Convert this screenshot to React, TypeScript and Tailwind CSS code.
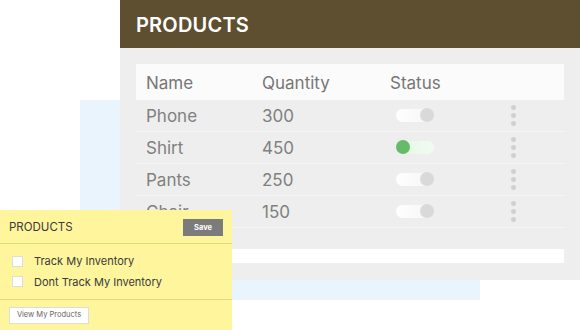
import React from "react";

const rows = [
  { name: "Phone", qty: 300, on: false },
  { name: "Shirt", qty: 450, on: true },
  { name: "Pants", qty: 250, on: false },
  { name: "Chair", qty: 150, on: false },
];

function Toggle({ on }: { on: boolean }) {
  return (
    <div className="relative h-[13px] w-[38px]">
      <div
        className={
          on
            ? "absolute inset-0 rounded-full bg-gradient-to-r from-[#e3f7e3] to-[#f2fbf2]"
            : "absolute inset-0 rounded-full bg-gradient-to-r from-white to-[#f4f4f4]"
        }
      />
      <div
        className={
          on
            ? "absolute -top-[1px] left-0 h-[14px] w-[14px] rounded-full bg-[#66bb6a]"
            : "absolute -top-[1px] right-0 h-[14px] w-[14px] rounded-full bg-[#d9d9d9]"
        }
      />
    </div>
  );
}

function Dots() {
  return (
    <div className="flex flex-col items-center gap-[3px]">
      <span className="h-[5px] w-[5px] rounded-full bg-[#d0d0d0]" />
      <span className="h-[5px] w-[5px] rounded-full bg-[#d0d0d0]" />
      <span className="h-[5px] w-[5px] rounded-full bg-[#d0d0d0]" />
    </div>
  );
}

function ProductsTable() {
  return (
    <div className="absolute left-[120px] top-0 flex h-[280px] w-[460px] flex-col bg-[#eeeeee]">
      <div className="flex h-[48px] items-center bg-[#5f4f31] pl-[16px] pt-[2px]">
        <h1 className="text-[20px] font-semibold tracking-[0.2px] text-white">PRODUCTS</h1>
      </div>
      <div className="mx-[16px] mt-[16px] flex flex-col">
        <div className="flex h-[36px] items-center bg-[#fbfbfb] pt-[3px] text-[17px] text-[#777]">
          <div className="w-[126px] pl-[10px]">Name</div>
          <div className="w-[128px]">Quantity</div>
          <div>Status</div>
        </div>
        {rows.map((r) => (
          <div
            key={r.name}
            className="flex h-[32px] items-center border-b border-[#f6f6f6] text-[17px] text-[#808080]"
          >
            <div className="w-[126px] pl-[10px] pt-[2px]">{r.name}</div>
            <div className="w-[134px] pt-[2px]">{r.qty}</div>
            <div className="w-[115px]">
              <Toggle on={r.on} />
            </div>
            <Dots />
          </div>
        ))}
        <div className="mt-[21px] h-[14px] bg-white" />
      </div>
    </div>
  );
}

function InventoryCard() {
  return (
    <div className="absolute left-0 top-[210px] flex h-[120px] w-[232px] flex-col bg-[#fff59d] text-[#3a3a3a]">
      <div className="flex h-[34px] items-center justify-between border-b border-[#e6d978] px-[9px] pt-[3px]">
        <span className="text-[11.5px]">PRODUCTS</span>
        <button className="-mt-[1px] h-[17px] w-[40px] bg-[#7b7b7b] text-[7.5px] font-bold text-white">Save</button>
      </div>
      <div className="flex flex-1 flex-col gap-[4px] border-b border-[#e6d978] pl-[12px] pt-[9px]">
        <label className="flex items-center gap-[11px] text-[11px]">
          <span className="h-[11px] w-[11px] border border-[#ddd] bg-white" />
          Track My Inventory
        </label>
        <label className="flex items-center gap-[11px] text-[11px]">
          <span className="h-[11px] w-[11px] border border-[#ddd] bg-white" />
          Dont Track My Inventory
        </label>
      </div>
      <div className="flex h-[30px] items-center pl-[9px]">
        <button className="h-[17px] w-[80px] border border-[#ddd] bg-white text-[7.5px] text-[#666]">
          View My Products
        </button>
      </div>
    </div>
  );
}

export default function App() {
  return (
    <div
      className="relative h-[330px] w-[580px] overflow-hidden bg-white"
      style={{ fontFamily: "Inter, 'Noto Sans', sans-serif" }}
    >
      <div className="absolute left-[80px] top-[100px] h-[200px] w-[400px] bg-[#eaf4fd]" />
      <ProductsTable />
      <InventoryCard />
    </div>
  );
}
